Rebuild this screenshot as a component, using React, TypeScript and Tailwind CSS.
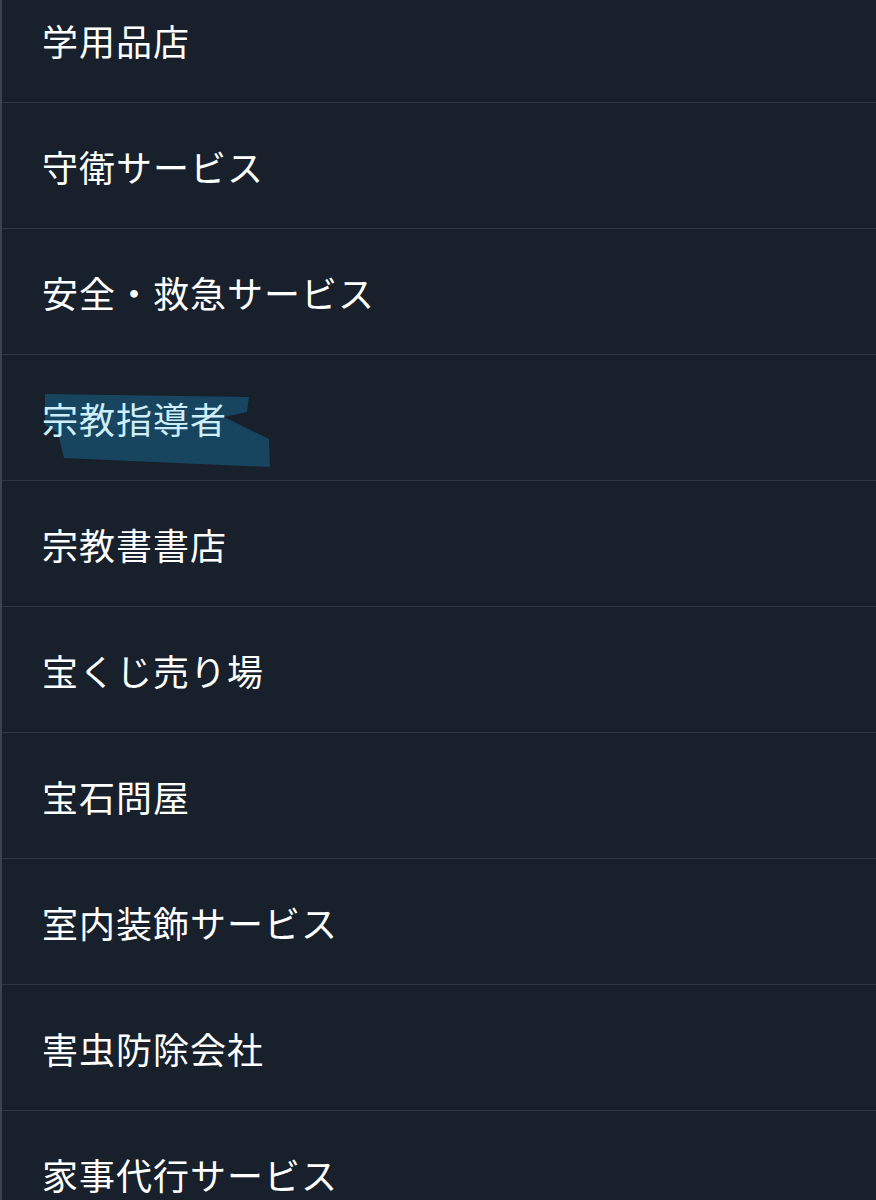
const ITEMS = [
  '学用品店',
  '守衛サービス',
  '安全・救急サービス',
  '宗教指導者',
  '宗教書書店',
  '宝くじ売り場',
  '宝石問屋',
  '室内装飾サービス',
  '害虫防除会社',
  '家事代行サービス',
]

const FONT = { fontFamily: '"Noto Sans CJK JP", "Noto Sans", sans-serif' }

// hand-drawn highlighter stroke behind the selected row
function Marker() {
  return (
    <svg className="absolute left-0 top-0 pointer-events-none" width="280" height="126" viewBox="0 0 280 126">
      <path
        d="M43 39 L247 42 L245 57 L222 62 L267 84 L268 112 L62 103 L56 78 L43 70 Z"
        fill="#174560"
      />
    </svg>
  )
}

export default function App() {
  return (
    <div className="w-[876px] h-[1200px] overflow-hidden bg-[#17202b] border-l-2 border-[#3a4350]" style={FONT}>
      <div className="-mt-[23px]">
        {ITEMS.map((name, i) => (
          <div key={name} className="relative h-[126px] flex items-center border-b border-[#2e3742]">
            {i === 3 && <Marker />}
            <span
              className={
                'relative pl-[40px] text-[36px] leading-none tracking-[1px] ' +
                (i === 3 ? 'text-[#cdeefb]' : 'text-white')
              }
            >
              {name}
            </span>
          </div>
        ))}
      </div>
    </div>
  )
}
